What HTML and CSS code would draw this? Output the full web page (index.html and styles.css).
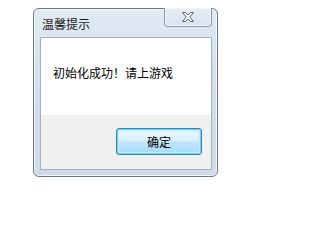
FILE: index.html
```html
<!DOCTYPE html>
<html lang="zh-CN">
<head>
<meta charset="utf-8">
<title>温馨提示</title>
<link rel="stylesheet" href="styles.css">
</head>
<body>
<div class="window">
  <div class="titlebar">
    <span class="title">温馨提示</span>
    <div class="close">
      <svg width="12" height="10" viewBox="0 0 12 10">
        <polygon points="0.5,0.5 3.5,0.5 6,2.8 8.5,0.5 11.5,0.5 7.8,5 11.5,9.5 8.5,9.5 6,7.2 3.5,9.5 0.5,9.5 4.2,5" fill="#f4f6f9" stroke="#5c6675" stroke-width="1" stroke-linejoin="round"/>
      </svg>
    </div>
  </div>
  <div class="client">
    <div class="message">初始化成功！请上游戏</div>
    <div class="footer">
      <button class="btn">确定</button>
    </div>
  </div>
</div>
</body>
</html>
```

FILE: styles.css
```css
html, body {
  margin: 0;
  padding: 0;
  background: #ffffff;
}
body {
  padding: 8px 0 0 33px;
  font-family: "Noto Sans CJK SC", "Noto Sans", sans-serif;
  font-size: 12px;
}
.window {
  box-sizing: border-box;
  width: 185px;
  height: 169px;
  border: 1px solid #6c7888;
  border-radius: 6px;
  background: linear-gradient(#e2eaf3, #d4dfeb 40%, #cfdbe8);
  box-shadow: inset 0 0 0 1px #f1f5fa;
  padding: 0 5px 6px 6px;
  display: flex;
  flex-direction: column;
}
.titlebar {
  height: 28px;
  display: flex;
  align-items: flex-start;
  justify-content: space-between;
}
.title {
  margin-left: 2px;
  margin-top: 6px;
  line-height: 18px;
  color: #1b1b1b;
  font-size: 12px;
}
.close {
  box-sizing: border-box;
  width: 48px;
  height: 19px;
  margin-top: -1px;
  border: 1px solid #8e99a8;
  border-top: none;
  border-radius: 0 0 4px 4px;
  background: linear-gradient(#e6edf5, #dae3ee);
  box-shadow: inset 0 0 0 1px #f2f6fa;
  display: flex;
  align-items: center;
  justify-content: center;
}
.close svg {
  display: block;
}
.client {
  flex: 1;
  border: 1px solid #a3afbd;
  background: #f0f0f0;
  display: flex;
  flex-direction: column;
}
.message {
  height: 77px;
  background: #ffffff;
  box-sizing: border-box;
  padding: 27px 0 0 12px;
  line-height: 16px;
  color: #000000;
}
.footer {
  flex: 1;
  display: flex;
  justify-content: flex-end;
  align-items: flex-start;
  padding: 13px 9px 0 0;
}
.btn {
  box-sizing: border-box;
  width: 86px;
  height: 27px;
  border: 1px solid #3c7fb1;
  border-radius: 3px;
  background: linear-gradient(#eaf6fd 0%, #d9f0fc 48%, #bee6fd 52%, #a7d9f5 100%);
  box-shadow: inset 0 0 0 1px #6fd1f6, inset 0 0 0 2px #c6ebfb;
  font-family: "Noto Sans CJK SC", "Noto Sans", sans-serif;
  font-size: 12px;
  color: #000000;
  padding: 0;
  line-height: 25px;
}
```
